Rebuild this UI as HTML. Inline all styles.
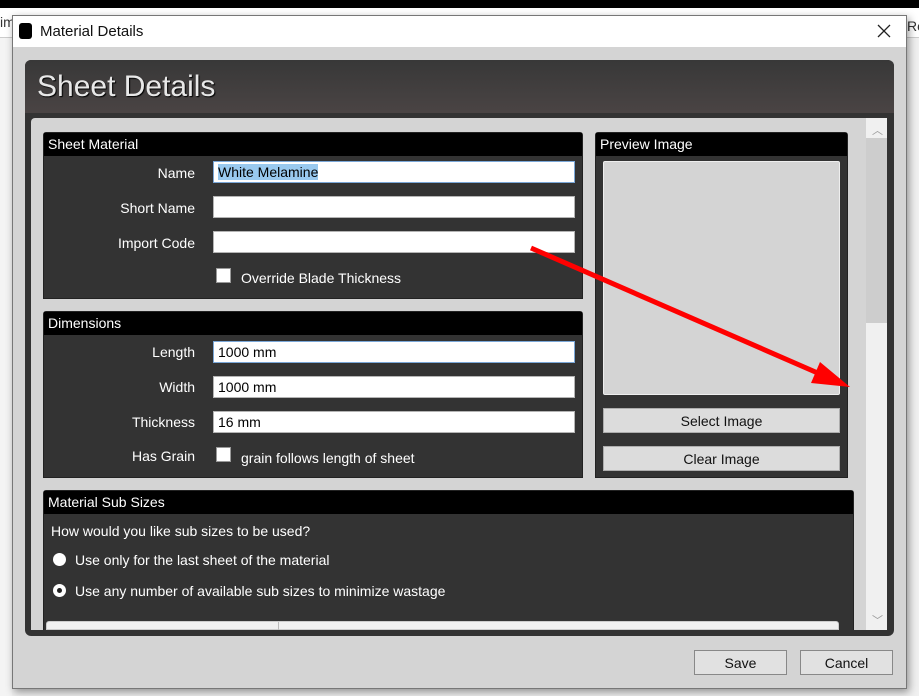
<!DOCTYPE html>
<html><head><style>
*{margin:0;padding:0;box-sizing:border-box}
body{width:919px;height:696px;background:#f0f0f0;position:relative;overflow:hidden;font-family:"Liberation Sans",sans-serif;font-size:14px}
.a{position:absolute}
.lbl{position:absolute;color:#fff;text-align:right;width:152px;font-size:14px}
.inp{position:absolute;background:#fff;border:1px solid #b4b4b4;height:22px;left:213px;width:362px;font-size:14px;padding:2px 4px;color:#000}
.grp{position:absolute;background:#333;border:1px solid #222;border-radius:3px 3px 0 0}
.gh{background:#000;color:#fff;height:23px;font-size:14px;padding:3px 4px}
.cb{position:absolute;width:15px;height:15px;background:#fff;border:1px solid #999}
.btn{position:absolute;background:#dcdcdc;border:1px solid #adadad;text-align:center;font-size:14px;color:#111}
</style></head><body>
<div class="a" style="left:0;top:0;width:919px;height:8px;background:#000"></div>
<div class="a" style="left:0;top:8px;width:919px;height:30px;background:#fff;border-bottom:1px solid #ccc"></div>
<div class="a" style="left:0;top:14px;font-size:14px;color:#333">im</div>
<div class="a" style="left:907px;top:18px;font-size:14px;color:#333">Ro</div>
<div class="a" style="left:0;top:38px;width:12px;height:658px;background:#f4f4f4"></div>
<div class="a" style="left:12px;top:15px;width:895px;height:674px;background:#d4d4d4;border:1px solid #777;box-shadow:2px 3px 8px rgba(0,0,0,.4)"></div>
<div class="a" style="left:13px;top:16px;width:893px;height:31px;background:#fff"></div>
<div class="a" style="left:19px;top:23px;width:13px;height:16px;background:#000;border-radius:3px"></div>
<div class="a" style="left:40px;top:23px;font-size:15px;color:#111">Material Details</div>
<svg class="a" style="left:877px;top:24px" width="14" height="14"><path d="M1 1L13 13M13 1L1 13" stroke="#222" stroke-width="1.3"/></svg>
<div class="a" style="left:25px;top:60px;width:869px;height:576px;background:#333;border-radius:6px"></div>
<div class="a" style="left:25px;top:60px;width:869px;height:53px;background:linear-gradient(#383838,#4a4444);border-radius:6px 6px 0 0"></div>
<div class="a" style="left:37px;top:70px;font-size:30px;color:#e8e8e8;text-shadow:1px 1px 1px #000">Sheet Details</div>
<div class="a" style="left:31px;top:118px;width:856px;height:512px;background:#d4d4d4;border-radius:4px 0 0 0"></div>
<div class="a" style="left:866px;top:118px;width:21px;height:512px;background:#f0f0f0"></div>
<div class="a" style="left:866px;top:138px;width:21px;height:185px;background:#cdcdcd"></div>
<div class="a" style="left:872px;top:122px;font-size:11px;color:#999">︿</div>
<div class="a" style="left:872px;top:612px;font-size:11px;color:#999">﹀</div>
<div class="grp" style="left:43px;top:132px;width:540px;height:167px"><div class="gh">Sheet Material</div></div>
<div class="lbl" style="left:43px;top:165px">Name</div>
<div class="inp" style="top:161px;border-color:#7aa7d8"><span style="background:#99c9ef">White Melamine</span></div>
<div class="lbl" style="left:43px;top:200px">Short Name</div>
<div class="inp" style="top:196px"></div>
<div class="lbl" style="left:43px;top:235px">Import Code</div>
<div class="inp" style="top:231px"></div>
<div class="cb" style="left:216px;top:268px"></div>
<div class="a" style="left:241px;top:270px;color:#fff">Override Blade Thickness</div>
<div class="grp" style="left:43px;top:311px;width:540px;height:167px"><div class="gh">Dimensions</div></div>
<div class="lbl" style="left:43px;top:344px">Length</div>
<div class="inp" style="top:341px;border-color:#7aa7d8">1000 mm</div>
<div class="lbl" style="left:43px;top:379px">Width</div>
<div class="inp" style="top:376px">1000 mm</div>
<div class="lbl" style="left:43px;top:414px">Thickness</div>
<div class="inp" style="top:411px">16 mm</div>
<div class="lbl" style="left:43px;top:448px">Has Grain</div>
<div class="cb" style="left:216px;top:447px"></div>
<div class="a" style="left:241px;top:450px;color:#fff">grain follows length of sheet</div>
<div class="grp" style="left:595px;top:132px;width:253px;height:346px"><div class="gh">Preview Image</div></div>
<div class="a" style="left:603px;top:161px;width:237px;height:234px;background:#d4d4d4;border:1px solid #eee;border-radius:2px"></div>
<div class="btn" style="left:603px;top:408px;width:237px;height:25px;padding-top:4px">Select Image</div>
<div class="btn" style="left:603px;top:446px;width:237px;height:25px;padding-top:4px">Clear Image</div>
<div class="grp" style="left:43px;top:490px;width:811px;height:140px;border-bottom:none"><div class="gh">Material Sub Sizes</div></div>
<div class="a" style="left:51px;top:523px;color:#fff">How would you like sub sizes to be used?</div>
<div class="a" style="left:53px;top:553px;width:13px;height:13px;border-radius:50%;background:#fff"></div>
<div class="a" style="left:75px;top:552px;color:#fff">Use only for the last sheet of the material</div>
<div class="a" style="left:53px;top:584px;width:13px;height:13px;border-radius:50%;background:#fff;border:4px solid #fff"><div style="width:5px;height:5px;background:#222;border-radius:50%"></div></div>
<div class="a" style="left:75px;top:583px;color:#fff">Use any number of available sub sizes to minimize wastage</div>
<div class="a" style="left:46px;top:621px;width:793px;height:9px;background:#f0f0f0;border-radius:3px 3px 0 0;border:1px solid #ccc"></div>
<div class="a" style="left:278px;top:622px;width:1px;height:8px;background:#bbb"></div>
<div class="btn" style="left:694px;top:650px;width:93px;height:25px;padding-top:4px;background:#e1e1e1;border-color:#888">Save</div>
<div class="btn" style="left:800px;top:650px;width:93px;height:25px;padding-top:4px;background:#e1e1e1;border-color:#888">Cancel</div>
<svg class="a" style="left:0;top:0" width="919" height="696"><line x1="531" y1="248" x2="820" y2="374" stroke="#f00" stroke-width="5"/><polygon points="850,387 811,383 820,362" fill="#f00"/></svg>
</body></html>
